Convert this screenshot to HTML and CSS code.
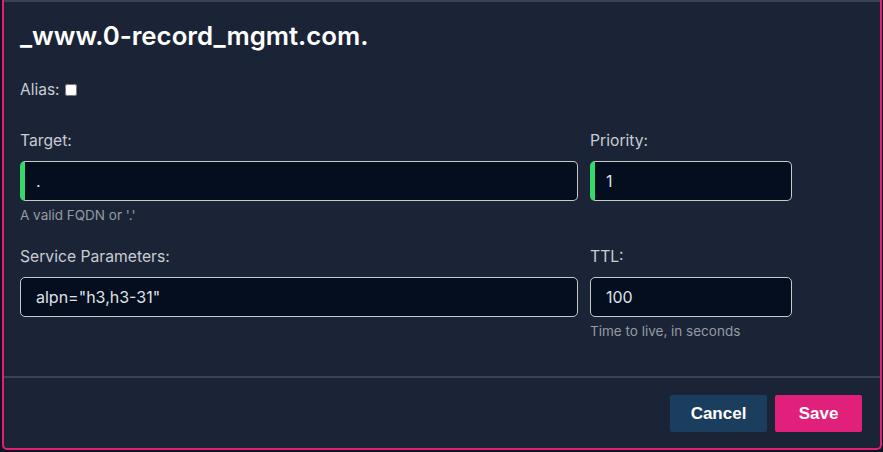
FILE: index.html
```html
<!DOCTYPE html>
<html lang="en">
<head>
    <meta charset="UTF-8">
    <meta name="viewport" content="width=device-width, initial-scale=1.0">
    <title>Edit Record</title>
    <link rel="stylesheet" href="styles.css">
</head>
<body>
    <div class="dialog">
        <div class="dialog-body">
            <h2 class="record-name">_www.0-record_mgmt.com.</h2>

            <label class="alias">Alias: <input type="checkbox"></label>

            <div class="fields">
                <div class="field">
                    <label>Target:</label>
                    <div class="input valid">.</div>
                    <small>A valid FQDN or '.'</small>
                </div>
                <div class="field">
                    <label>Priority:</label>
                    <div class="input valid">1</div>
                </div>
                <div class="field">
                    <label>Service Parameters:</label>
                    <div class="input">alpn="h3,h3-31"</div>
                </div>
                <div class="field">
                    <label>TTL:</label>
                    <div class="input">100</div>
                    <small>Time to live, in seconds</small>
                </div>
            </div>
        </div>
        <div class="actions">
            <button class="cancel">Cancel</button>
            <button class="save">Save</button>
        </div>
    </div>
</body>
</html>
```

FILE: styles.css
```css
body {
    margin: 0;
    background-color: #0d1322;
    font-family: Inter, "Noto Sans", sans-serif;
    height: 452px;
    overflow: hidden;
}
.dialog {
    margin-left: 2px;
    width: 876px;
    height: 448px;
    background-color: #1b2437;
    border: 2px solid #e2206f;
    border-top: none;
    border-radius: 0 0 5px 5px;
    display: flex;
    flex-direction: column;
}
.dialog-body {
    border-top: 2px solid #3b4352;
    padding: 0 16px;
    height: 376px;
    box-sizing: border-box;
}
.record-name {
    margin: 16px 0 0 0;
    font-size: 25.8px;
    font-weight: 600;
    line-height: 36px;
    color: #ffffff;
}
.alias {
    display: flex;
    align-items: center;
    gap: 5px;
    margin-top: 26px;
    font-size: 15.5px;
    line-height: 20px;
    color: #c9ccd3;
}
.alias input {
    margin: 0;
    width: 12px;
    height: 12px;
}
.fields {
    display: grid;
    grid-template-columns: 558px 202px;
    column-gap: 12px;
    row-gap: 24px;
    margin-top: 31px;
}
.field {
    display: flex;
    flex-direction: column;
}
.field label {
    font-size: 15.7px;
    line-height: 20px;
    color: #c9ccd3;
    margin-bottom: 10px;
}
.input {
    height: 40px;
    box-sizing: border-box;
    background-color: #050e1f;
    border: 1px solid #c9c9c9;
    border-radius: 5px;
    padding: 0 15px;
    font-size: 16px;
    line-height: 38px;
    color: #dfe2e7;
}
.input.valid {
    border-left: 5px solid #34d96a;
    padding-left: 11px;
}
.field small {
    margin-top: 6px;
    font-size: 13.5px;
    line-height: 16px;
    color: #959aa3;
}
.actions {
    border-top: 2px solid #3b4352;
    display: flex;
    justify-content: flex-end;
    gap: 8px;
    padding: 17px 18px 0 0;
}
.actions button {
    height: 37px;
    border: none;
    border-radius: 2px;
    font-family: "Liberation Sans", Arial, sans-serif;
    font-size: 17px;
    font-weight: bold;
    color: white;
    cursor: pointer;
}
.cancel {
    width: 97px;
    background-color: #1b3d5e;
}
.save {
    width: 87px;
    background-color: #e0207a;
}
```
